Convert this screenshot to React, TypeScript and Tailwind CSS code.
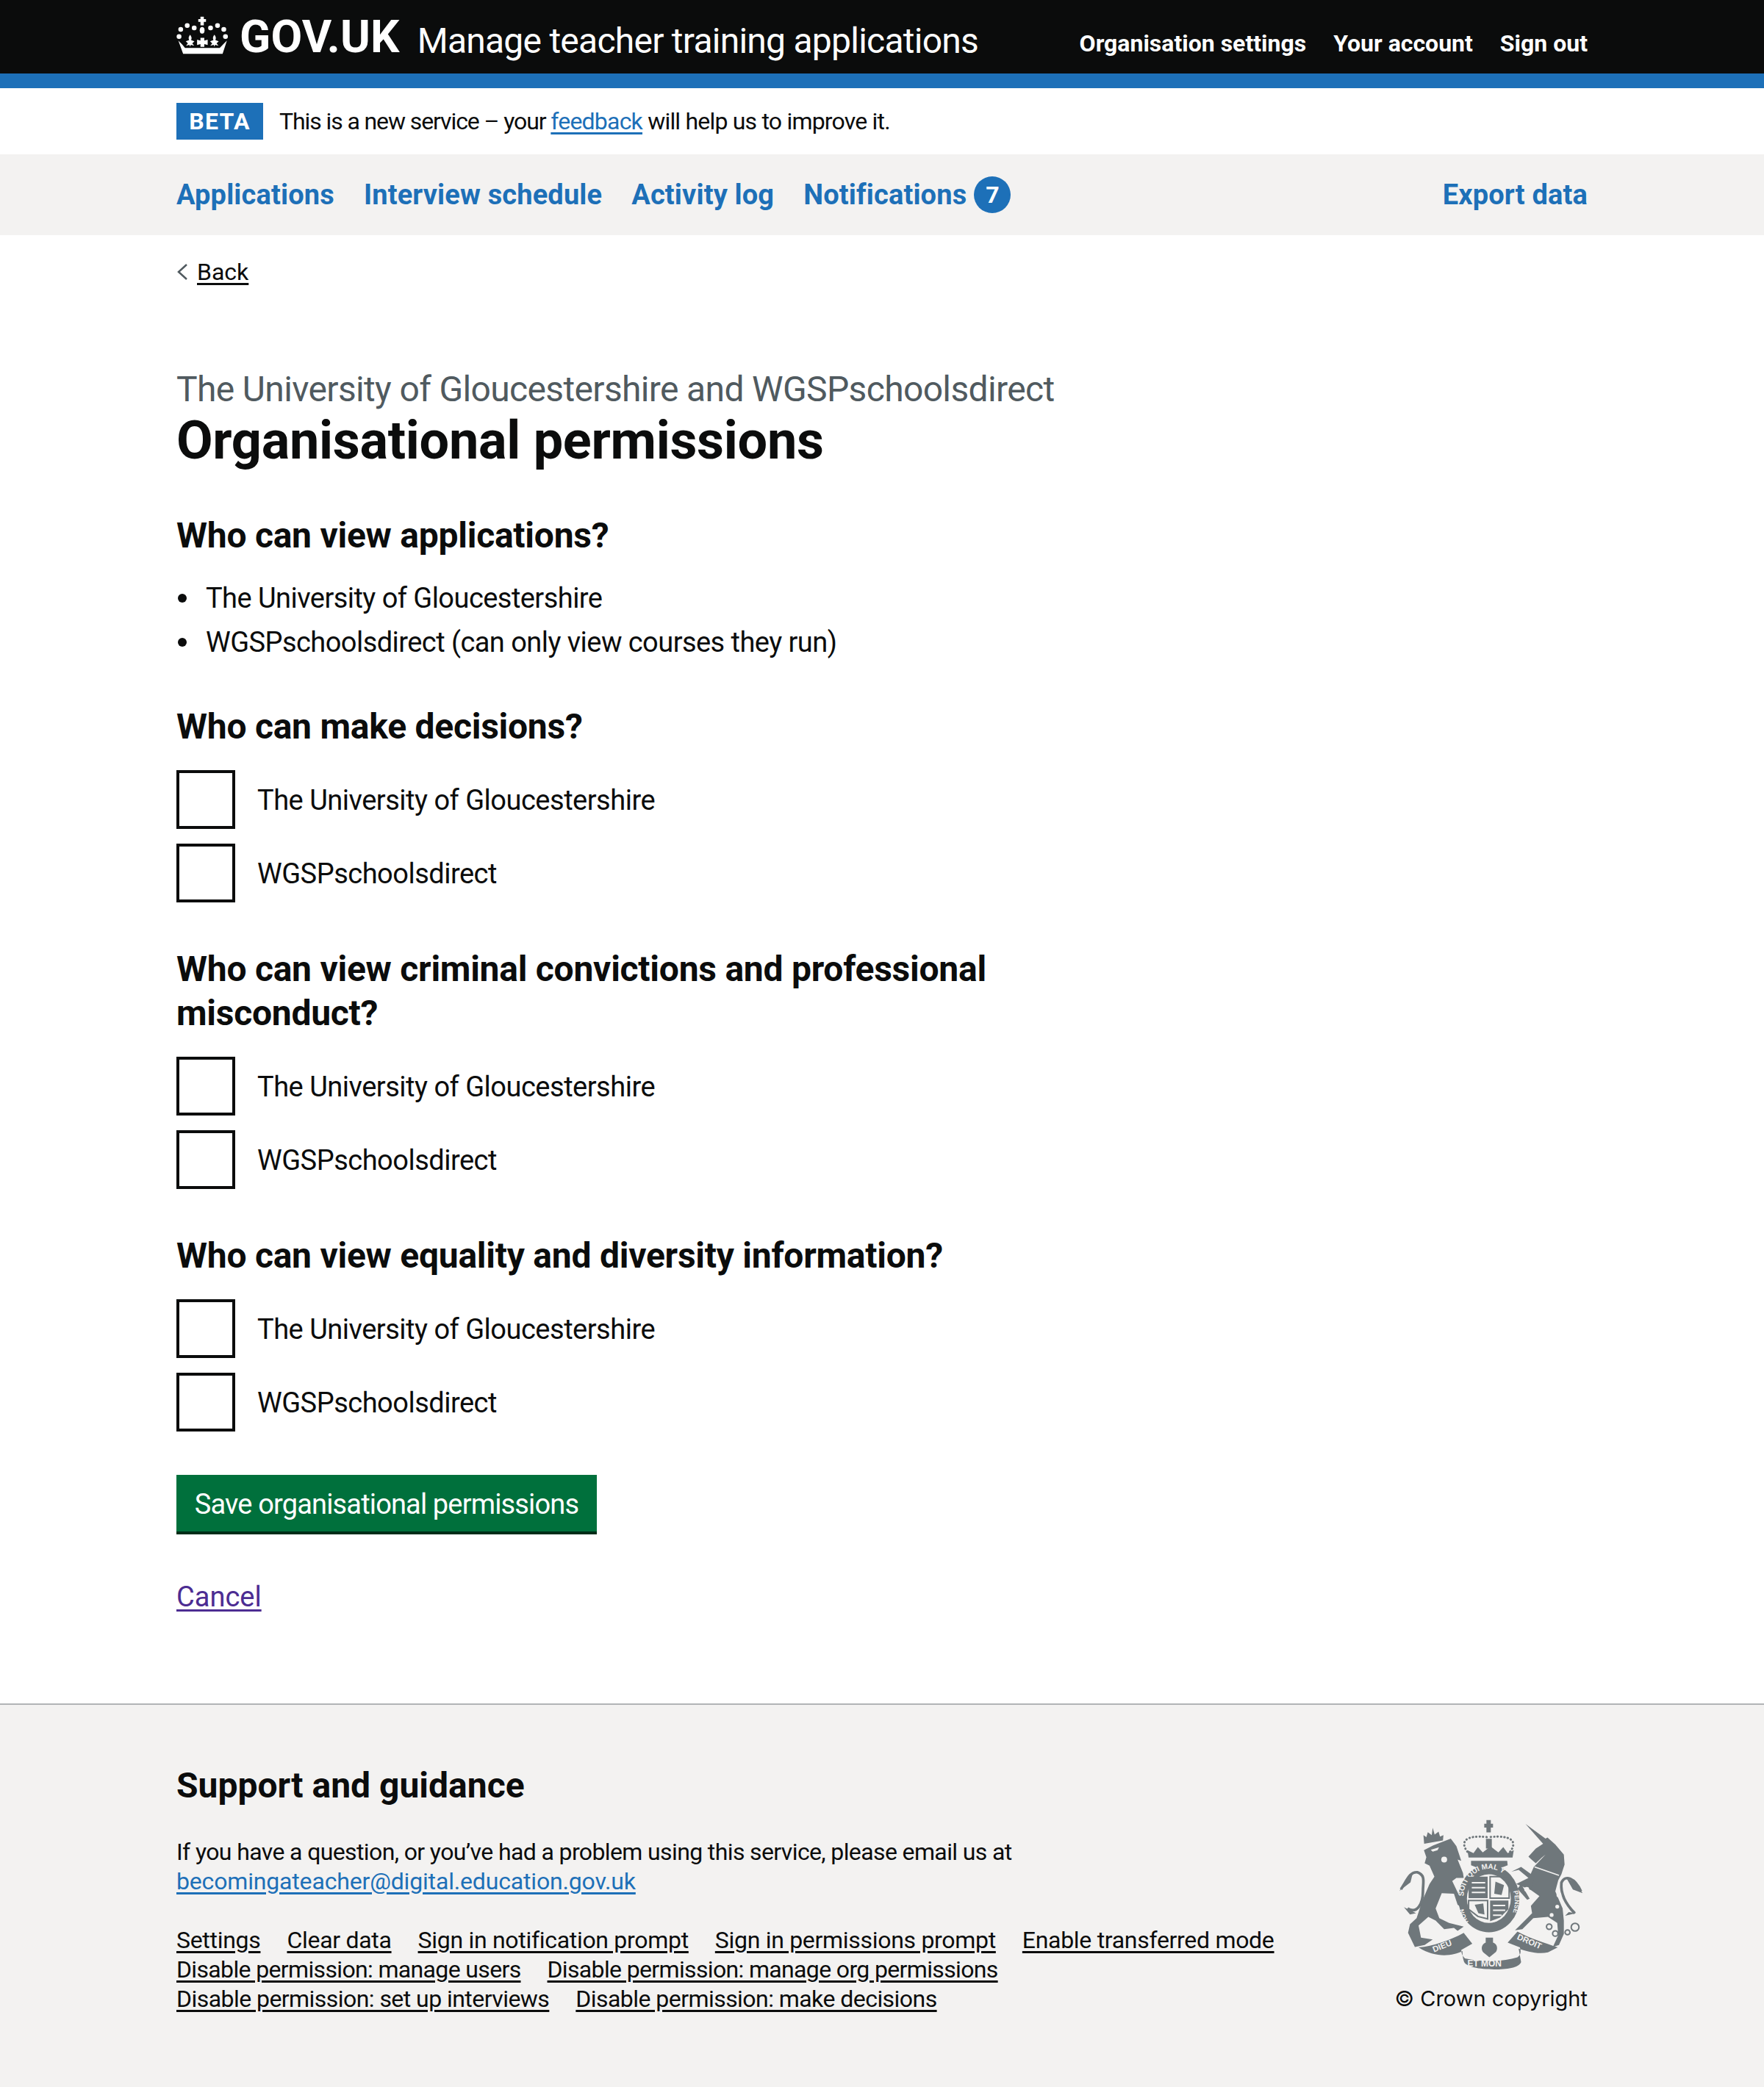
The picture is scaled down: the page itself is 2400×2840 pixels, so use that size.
import React from "react";

const navLink = "text-[38px] leading-[50px] font-bold text-[#1d70b8] tracking-[0.15px]";
const footerLink = "text-[32px] leading-[40px] underline underline-offset-[4px] text-[#0b0c0c] mr-9";
const serif = "Liberation Sans, sans-serif";

const Crown = () => (
  <svg viewBox="60 0 220 165" className="w-[72px] h-[54px] shrink-0 -mt-1" fill="#fff">
    <path d="M160 5h14v10h9v12h-9v14h-14V27h-9V15h9z" />
    <ellipse cx="167" cy="62" rx="10" ry="14" />
    <circle cx="105" cy="42" r="10" />
    <circle cx="134" cy="52" r="10" />
    <circle cx="78" cy="58" r="10" />
    <circle cx="71" cy="88" r="10" />
    <circle cx="202" cy="52" r="10" />
    <circle cx="231" cy="42" r="10" />
    <circle cx="257" cy="58" r="10" />
    <circle cx="264" cy="88" r="10" />
    <path d="M117 80c6 8 8 14 4 22l14 6-9 8 8 10-14-4-3 8-3-8-14 4 8-10-9-8 14-6c-4-8-2-14 4-22z" />
    <path d="M218 80c6 8 8 14 4 22l14 6-9 8 8 10-14-4-3 8-3-8-14 4 8-10-9-8 14-6c-4-8-2-14 4-22z" />
    <path d="M160 93h16v12l14-4v22l-14-4v12h-16v-12l-14 4v-22l14 4z" />
    <path d="M68 105l16 16 12 14 144 0 14-14 16-16-18 55H88z" />
  </svg>
);

const Crest = () => (
  <svg viewBox="160 103 756 620" className="w-[252px] h-[206px] mr-[5px]" fill="#6f777b">
    {/* lion */}
    <path d="M262 232L300 212 372 184 395 215 415 275 400 270 422 325 425 345 395 345 378 358 410 425 432 450 420 468 400 455 385 410 335 408 310 470 325 510 365 530 425 545 400 562 385 550 345 555 310 520 280 505 240 540 250 590 298 597 265 620 225 628 197 570 205 535 232 510 255 440 285 370 305 340 285 295 265 285 272 260z" />
    <path d="M195 470C235 495 258 450 258 400 258 360 270 335 235 322 205 320 195 350 168 392" fill="none" stroke="#6f777b" strokeWidth="11" />
    <path d="M162 398l30-50 25-25-10 40zM180 465l50 25-25 5z" />
    <path d="M263 205l-3-35 12 8 6-20 16 12 4-30 8 28 16-12 6 20 14-6-2 22z" />
    <circle cx="345" cy="270" r="12" fill="#f3f2f1" />
    <path d="M290 230l34-10-6 12-20 6z" fill="#f3f2f1" />
    {/* unicorn */}
    <path d="M678 124L760 184 768 180 800 208 835 250 838 290 825 330 812 355 800 400 830 470 835 520 835 575 815 620 790 628 812 580 808 530 770 505 710 510 665 555 635 560 660 535 705 490 700 460 735 420 700 395 690 350 712 300 760 250 745 262 720 285 700 268 690 258 720 225 750 205z" />
    <path d="M700 395L640 370 690 345 650 312 620 320 660 300 715 340z" />
    <path d="M660 370l35 60-10 5-40-45z" />
    <path d="M880 490C850 460 820 420 825 365 840 330 880 345 905 400" fill="none" stroke="#6f777b" strokeWidth="11" />
    <path d="M912 408l-40-15-25-45 35 15zM885 490l-45 10 15-15z" />
    <circle cx="785" cy="497" r="8" fill="#f3f2f1" />
    <circle cx="808" cy="463" r="8" fill="#f3f2f1" />
    <circle cx="815" cy="415" r="10" fill="#f3f2f1" />
    <circle cx="692" cy="306" r="10" fill="#f3f2f1" />
    <circle cx="683" cy="392" r="10" fill="#f3f2f1" />
    <circle cx="775" cy="545" r="11" fill="none" stroke="#6f777b" strokeWidth="6" />
    <circle cx="800" cy="573" r="11" fill="none" stroke="#6f777b" strokeWidth="6" />
    <circle cx="850" cy="568" r="10" fill="none" stroke="#6f777b" strokeWidth="6" />
    <circle cx="881" cy="547" r="16" fill="none" stroke="#6f777b" strokeWidth="6" />
    <path d="M715 300l100 35" stroke="#f3f2f1" strokeWidth="5" />
    {/* royal crown */}
    <path d="M518 108h18v15h9v16h-9v20h-18v-20h-9v-16h9z" />
    <path d="M516 185h24v40h-24z" />
    <path d="M445 262l-5-30 25 12 18-25 20 22 32-25 32 25 20-22 18 25 25-12-5 30z" />
    <path d="M455 275h148l2 18-30 12-90 0-30-12z" />
    <g fill="none" stroke="#6f777b" strokeWidth="9" strokeDasharray="1 13" strokeLinecap="round">
      <path d="M440 238c-30-40-10-70 80-60" />
      <path d="M615 238c30-40 10-70-85-60" />
    </g>
    {/* garter */}
    <ellipse cx="528" cy="430" rx="125" ry="138" />
    <ellipse cx="528" cy="430" rx="90" ry="100" fill="#f3f2f1" />
    <path id="garter-top" d="M425 420a103 112 0 0 1 206 0" fill="none" />
    <path id="garter-bot" d="M445 525a120 130 0 0 1-22-60" fill="none" />
    <path id="garter-right" d="M628 400a115 125 0 0 1-28 130" fill="none" />
    <text fontFamily={serif} fontWeight="700" fontSize="30" fill="#f3f2f1">
      <textPath href="#garter-top">SOIT QUI MAL Y</textPath>
    </text>
    <text fontFamily={serif} fontWeight="700" fontSize="26" fill="#f3f2f1">
      <textPath href="#garter-right">PENSE</textPath>
    </text>
    <text fontFamily={serif} fontWeight="700" fontSize="26" fill="#f3f2f1">
      <textPath href="#garter-bot">HON</textPath>
    </text>
    {/* quartered shield */}
    <path d="M445 340h78v88h-78z" />
    <path d="M533 340h78v88h-78z" fill="none" stroke="#6f777b" strokeWidth="6" />
    <path d="M445 438h78v75l-40-10-38-30z" fill="none" stroke="#6f777b" strokeWidth="6" />
    <path d="M533 438h75v35l-35 35-40 15z" />
    <path d="M555 360l35 15-10 40-30-5z" />
    <path d="M470 455l35-5 5 45-25-5z" />
    <path d="M458 365h55M458 385h55M458 405h55M545 458h50M545 478h50M545 498h35" stroke="#f3f2f1" strokeWidth="6" />
    {/* motto */}
    <path d="M240 630c60-5 130-30 185-60l35 45-45 25c0 15 5 25 15 35 70 15 150 15 215-5 15-10 15-25 10-40l-50-20 40-45c55 30 110 45 165 65l-40 20c-40 10-90-5-120-15l10 55c-10 25-60 30-110 30-60 0-120-10-125-35-5-15-5-30-5-40-40 20-110 30-180-15z" />
    <path d="M515 590h30v20c20 5 20 30 10 40l-25 20-25-20c-12-15-5-35 10-40z" />
    <text fontFamily={serif} fontWeight="700" fontSize="34" fill="#f3f2f1" transform="rotate(-22 345 620)" x="295" y="632">DIEU</text>
    <text fontFamily={serif} fontWeight="700" fontSize="36" fill="#f3f2f1" x="440" y="708">ET MON</text>
    <text fontFamily={serif} fontWeight="700" fontSize="34" fill="#f3f2f1" transform="rotate(24 700 610)" x="640" y="620">DROIT</text>
  </svg>
);

const Checkbox = ({ label }: { label: string }) => (
  <label className="flex items-center h-20 mb-5 last:mb-0">
    <span className="w-20 h-20 border-4 border-[#0b0c0c] bg-white shrink-0" />
    <span className="ml-[30px] pt-[2px] text-[38px] leading-[50px] tracking-[-0.5px]">{label}</span>
  </label>
);

const Group = ({ title }: { title: React.ReactNode }) => (
  <section className="mb-[59px]">
    <h2 className="pt-[2px] text-[48px] leading-[60px] font-bold tracking-[-0.25px] mb-[29px]">{title}</h2>
    <Checkbox label="The University of Gloucestershire" />
    <Checkbox label="WGSPschoolsdirect" />
  </section>
);

const Bullet = ({ children }: { children: React.ReactNode }) => (
  <li className="flex items-center">
    <span className="w-3 h-3 rounded-full bg-[#0b0c0c] ml-[2px] mr-[26px] shrink-0" />
    {children}
  </li>
);

export default function App() {
  return (
    <div className="min-h-[2840px] flex flex-col bg-white text-[#0b0c0c] font-['Roboto',sans-serif]">
      <header className="bg-[#0b0c0c] text-white h-[120px] border-b-[20px] border-[#1d70b8]">
        <div className="w-[1920px] mx-auto h-full flex items-center justify-between">
          <div className="flex items-center">
            <Crown />
            <span className="ml-[14px] text-[62px] leading-none font-bold tracking-[0.2px]">GOV.UK</span>
            <span className="ml-[24px] text-[48px] leading-none tracking-[-0.75px] pt-[11px]">Manage teacher training applications</span>
          </div>
          <nav className="flex gap-[37px] text-[32px] font-bold pt-[17px]">
            <a>Organisation settings</a>
            <a>Your account</a>
            <a>Sign out</a>
          </nav>
        </div>
      </header>

      <div className="h-[90px]">
        <div className="w-[1920px] mx-auto h-full flex items-center">
          <strong className="w-[118px] h-[50px] bg-[#1d70b8] text-white text-[32px] font-bold tracking-[1.3px] flex items-center justify-center">BETA</strong>
          <p className="ml-[22px] text-[32px] leading-[40px] tracking-[-0.8px]">
            <span className="tracking-[-1.1px]">This is a new service – your </span>
            <a className="text-[#1d70b8] underline underline-offset-[4px]">feedback</a> will help us to improve it.
          </p>
        </div>
      </div>

      <nav className="bg-[#f3f2f1] h-[110px]">
        <div className="w-[1920px] mx-auto h-full flex items-center justify-between">
          <div className="flex items-center gap-10">
            <a className={navLink}>Applications</a>
            <a className={navLink}>Interview schedule</a>
            <a className={navLink}>Activity log</a>
            <span className="flex items-center gap-[10px]">
              <a className={navLink}>Notifications</a>
              <span className="w-[50px] h-[50px] rounded-full bg-[#1d70b8] text-white text-[32px] font-bold flex items-center justify-center">7</span>
            </span>
          </div>
          <a className={navLink}>Export data</a>
        </div>
      </nav>

      <main className="w-[1920px] mx-auto flex-1">
        <a className="flex items-center h-10 mt-[30px] text-[32px]">
          <svg viewBox="0 0 16 24" className="w-4 h-6 mr-3" fill="none" stroke="#505a5f" strokeWidth="2.5">
            <path d="M14 2L3 12l11 10" />
          </svg>
          <span className="underline underline-offset-[4px]">Back</span>
        </a>

        <div className="w-[1270px] mt-[110px]">
          <span className="block text-[48px] leading-[60px] text-[#505a5f] tracking-[-0.65px]">
            The University of Gloucestershire and WGSPschoolsdirect
          </span>
          <h1 className="text-[72px] leading-[80px] font-bold tracking-[-0.28px] mb-[57px]">Organisational permissions</h1>

          <section className="mb-[58px]">
            <h2 className="pt-[2px] text-[48px] leading-[60px] font-bold tracking-[-0.25px] mb-[28px]">Who can view applications?</h2>
            <ul className="pt-[2px] text-[38px] leading-[50px] tracking-[-0.55px] flex flex-col gap-[10px]">
              <Bullet>The University of Gloucestershire</Bullet>
              <Bullet>WGSPschoolsdirect (can only view courses they run)</Bullet>
            </ul>
          </section>

          <Group title="Who can make decisions?" />
          <Group title="Who can view criminal convictions and professional misconduct?" />
          <Group title="Who can view equality and diversity information?" />

          <button className="block pt-[3px] h-[81px] w-[572px] bg-[#00703c] border-b-4 border-[#002d18] text-white text-[38px] leading-[50px] tracking-[-0.85px] text-center">
            Save organisational permissions
          </button>
          <a className="block mt-[60px] text-[38px] leading-[50px] text-[#4c2c92] underline underline-offset-[4px]">Cancel</a>
        </div>
      </main>

      <footer className="bg-[#f3f2f1] border-t-2 border-[#b1b4b6] h-[522px]">
        <div className="w-[1920px] mx-auto flex justify-between items-start pt-[80px]">
          <div className="w-[1600px]">
            <h2 className="text-[48px] leading-[60px] font-bold mb-[40px]">Support and guidance</h2>
            <p className="text-[32px] leading-[40px] tracking-[-0.62px] mb-10">
              If you have a question, or you’ve had a problem using this service, please email us at<br />
              <a className="text-[#1d70b8] underline underline-offset-[4px] tracking-[-0.17px]">becomingateacher@digital.education.gov.uk</a>
            </p>
            <div className="flex flex-col">
              <div className="flex tracking-[-0.3px]">
                {["Settings", "Clear data", "Sign in notification prompt", "Sign in permissions prompt", "Enable transferred mode"].map((t) => (
                  <a key={t} className={footerLink}>{t}</a>
                ))}
              </div>
              <div className="flex tracking-[-0.65px]">
                {["Disable permission: manage users", "Disable permission: manage org permissions"].map((t) => (
                  <a key={t} className={footerLink}>{t}</a>
                ))}
              </div>
              <div className="flex tracking-[-0.55px]">
                {["Disable permission: set up interviews", "Disable permission: make decisions"].map((t) => (
                  <a key={t} className={footerLink}>{t}</a>
                ))}
              </div>
            </div>
          </div>
          <div className="flex flex-col items-end pt-[75px]">
            <Crest />
            <span className="mt-[19px] text-[29px] leading-[40px] font-['Inter',sans-serif]">© Crown copyright</span>
          </div>
        </div>
      </footer>
    </div>
  );
}
